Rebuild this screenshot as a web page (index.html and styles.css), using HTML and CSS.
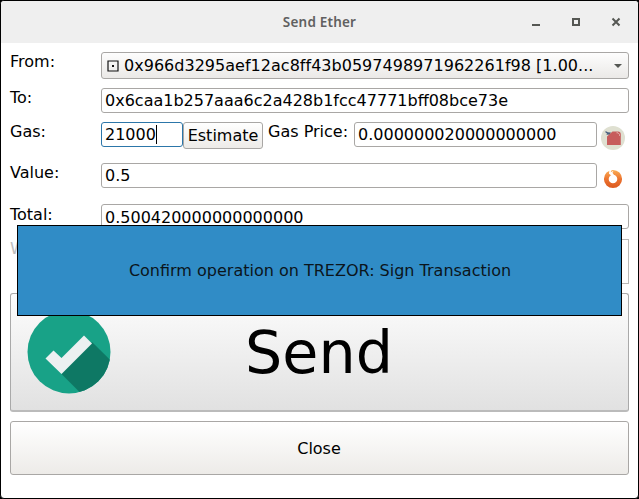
FILE: index.html
```html
<!DOCTYPE html>
<html lang="en">
<head>
<meta charset="utf-8">
<title>Send Ether</title>
<link rel="stylesheet" href="styles.css">
</head>
<body>
<div class="window">
  <header class="titlebar">
    <span class="title">Send Ether</span>
    <svg class="controls" width="92" height="12" viewBox="0 0 92 12" fill="none" stroke="#555753">
      <path d="M1 9h8" stroke-width="2"/>
      <path d="M42 3h6v6h-6z" stroke-width="2"/>
      <path d="M81.500 2.500l7 7M88.500 2.500l-7 7" stroke-width="2"/>
    </svg>
  </header>
  <main class="form">
    <div class="row row-from">
      <label>From:</label>
      <div class="select">
        <svg width="12" height="12" viewBox="0 0 12 12"><path d="M1 1h10v10H1z" fill="none" stroke="#111" stroke-width="1.2"/><path d="M5 5h2v2H5z" fill="#111"/></svg>
        <span>0x966d3295aef12ac8ff43b0597498971962261f98 [1.00...</span>
        <i class="arrow"></i>
      </div>
    </div>
    <div class="row row-to">
      <label>To:</label>
      <div class="field">0x6caa1b257aaa6c2a428b1fcc47771bff08bce73e</div>
    </div>
    <div class="row row-icon">
      <label>Gas:</label>
      <div class="field focused gas">21000<i class="caret"></i></div>
      <button class="estimate">Estimate</button>
      <label class="price-label">Gas Price:</label>
      <div class="field">0.000000020000000000</div>
      <svg class="icon" width="32" height="32" viewBox="0 0 32 32">
        <circle cx="16" cy="16" r="12" fill="#dfe0d1"/>
        <path d="M8.500 9l2.500 1.200 3 .3-1.500 2.500-1.500-.5L9.500 13l.5-1.500-1.500-1z" fill="#4c6280"/>
        <path d="M10 14.500l5.500-5h5.500q2.800 0 2.800 3V23H10z" fill="#c75c5c"/>
        <path d="M19.500 10.800h1.500l1.500 1.500v1.500" fill="none" stroke="#e3b3ae" stroke-width="1"/>
      </svg>
    </div>
    <div class="row row-icon">
      <label>Value:</label>
      <div class="field">0.5</div>
      <svg class="icon" width="32" height="32" viewBox="0 0 32 32">
        <defs><linearGradient id="ring" x1="0" y1="7" x2="0" y2="25" gradientUnits="userSpaceOnUse"><stop offset="0" stop-color="#fbae55"/><stop offset=".5" stop-color="#ec7430"/><stop offset="1" stop-color="#dc5a20"/></linearGradient></defs>
        <circle cx="16" cy="16" r="6.700" fill="none" stroke="url(#ring)" stroke-width="4.800"/>
        <path d="M12.500 6l2 1-.8 2.200 2.800-1.500-1 2 1.500 2.200-3 .3-2-1.500z" fill="#fff"/>
      </svg>
    </div>
    <div class="row row-total">
      <label>Total:</label>
      <div class="field">0.500420000000000000</div>
    </div>
    <div class="row row-disabled">
      <label>W</label>
      <div class="panel"></div>
    </div>
    <button class="send">
      <svg class="check" width="84" height="84" viewBox="0 0 84 84">
        <defs><clipPath id="disc"><circle cx="42" cy="42" r="41.500"/></clipPath></defs>
        <g clip-path="url(#disc)">
          <path d="M0 0h84v84H0z" fill="#18a287"/>
          <path d="M34.500 64L65 32l30 29.500v30H62z" fill="#0e7864"/>
        </g>
        <path d="M18.500 48.500l8-8 8 7.500 22.500-22.500 8 8L34.500 64z" fill="#ecf0f1"/>
      </svg>
      <span>Send</span>
    </button>
    <button class="close">Close</button>
  </main>
  <div class="notice">Confirm operation on TREZOR: Sign Transaction</div>
</div>
</body>
</html>
```
FILE: styles.css
```css
* { box-sizing: border-box; }
body {
  margin: 0;
  background: #000;
  color: #000;
  font: 16px/19px "DejaVu Sans", sans-serif;
}
.window {
  position: relative;
  width: 639px;
  height: 499px;
  border: 1px solid #000;
  border-radius: 4px;
  background: #fff;
  overflow: hidden;
}
.titlebar {
  display: grid;
  grid-template-columns: 1fr auto 1fr;
  align-items: center;
  height: 42px;
  background: #efefef;
}
.title {
  grid-column: 2;
  color: #606060;
  font: 600 13.5px/20px "Noto Sans", sans-serif;
  letter-spacing: .2px;
}
.controls { justify-self: end; margin-right: 15px; }
.form {
  display: flex;
  flex-direction: column;
  padding: 9px 9px 0;
}
.row {
  display: flex;
  align-items: flex-start;
  margin-bottom: 9px;
}
.row > label:first-child { width: 91px; flex: none; }
.row-from { height: 27px; }
.row-to { height: 25px; }
.row-icon { height: 32px; }
.row-total { height: 25px; margin-bottom: 10px; }
.row-total label { padding-top: 1px; }
.row-disabled { height: 45px; color: #bebebe; }
.field, .select, .panel {
  flex: 1;
  border: 1px solid #a9a7a5;
  border-radius: 3px;
  white-space: nowrap;
}
.field { height: 25px; padding: 2px 3px; background: #fff; }
.row-total .field { padding-top: 3px; }
.focused { border-color: #2c76a9; }
.gas { flex: 0 0 82px; display: flex; }
.caret { width: 1px; height: 19px; background: #000; }
.select {
  display: flex;
  align-items: center;
  height: 27px;
  padding: 0 6px 0 5px;
  background: linear-gradient(#fdfdfd, #ebe9e7);
}
.select span { margin-left: 5px; letter-spacing: .02px; }
.arrow {
  margin-left: auto;
  border: 4px solid transparent;
  border-top-color: #555753;
  border-bottom: 0;
}
button {
  border: 1px solid #a9a7a5;
  border-radius: 3px;
  padding: 0;
  background: linear-gradient(#fff, #edebe8);
  color: #000;
  font: inherit;
}
.estimate { flex: 0 0 80px; height: 27px; }
.price-label { flex: 0 0 91px; padding-left: 5px; }
.icon { flex: none; }
.panel { height: 45px; border-radius: 0; border-color: #b9b8b6; }
.send {
  display: grid;
  grid-template-columns: 1fr auto 1fr;
  align-items: center;
  height: 119px;
  border-color: #a9a9a9;
  border-bottom: 2px solid #bbb;
  background: linear-gradient(#fdfdfd, #e1e1e1);
  font-size: 58.700px;
  line-height: 68px;
}
.send span { padding-top: 2px; margin-left: -1px; }
.check { margin-left: 16px; }
.close { height: 54px; margin-top: 9px; padding-right: 1px; }
.notice {
  position: absolute;
  left: 16px;
  top: 224px;
  width: 605px;
  height: 91px;
  padding-left: 1px;
  border: 1px solid #000;
  background: #308cc6;
  color: #0b151c;
  line-height: 89px;
  text-align: center;
}
```
